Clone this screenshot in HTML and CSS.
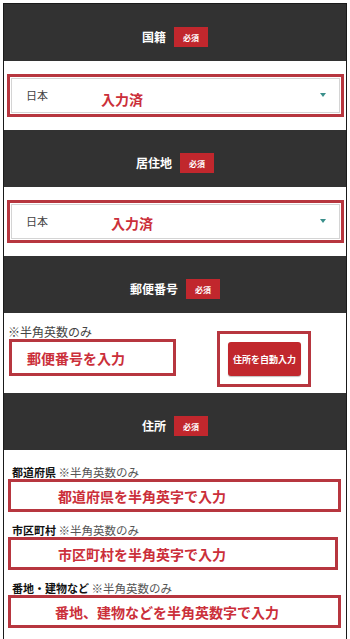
FILE: index.html
```html
<!DOCTYPE html>
<html lang="ja">
<head>
<meta charset="utf-8">
<title>フォーム</title>
<link rel="stylesheet" href="styles.css">
</head>
<body>
<div class="frame">
  <div class="sec-head"><span class="sec-title">国籍</span><span class="badge">必須</span></div>
  <div class="sec-body sel-body">
    <div class="mark sel-mark">
      <div class="select">
        <span class="sel-value">日本</span>
        <span class="ann ann-sel">入力済</span>
        <span class="arrow"></span>
      </div>
    </div>
  </div>

  <div class="sec-head"><span class="sec-title">居住地</span><span class="badge">必須</span></div>
  <div class="sec-body sel-body">
    <div class="mark sel-mark">
      <div class="select">
        <span class="sel-value">日本</span>
        <span class="ann ann-sel ann-sel-2">入力済</span>
        <span class="arrow"></span>
      </div>
    </div>
  </div>

  <div class="sec-head"><span class="sec-title">郵便番号</span><span class="badge">必須</span></div>
  <div class="sec-body postal">
    <div class="postal-left">
      <div class="note">※半角英数のみ</div>
      <div class="mark postal-box"><span class="ann">郵便番号を入力</span></div>
    </div>
    <div class="mark btn-mark">
      <div class="btn">住所を自動入力</div>
    </div>
  </div>

  <div class="sec-head"><span class="sec-title">住所</span><span class="badge">必須</span></div>
  <div class="sec-body addr">
    <div class="field">
      <div class="f-label"><b>都道府県</b> <span class="f-note">※半角英数のみ</span></div>
      <div class="mark addr-box"><span class="ann">都道府県を半角英字で入力</span></div>
    </div>
    <div class="field">
      <div class="f-label"><b>市区町村</b> <span class="f-note">※半角英数のみ</span></div>
      <div class="mark addr-box addr-box-narrow"><span class="ann">市区町村を半角英字で入力</span></div>
    </div>
    <div class="field">
      <div class="f-label"><b>番地・建物など</b> <span class="f-note">※半角英数のみ</span></div>
      <div class="mark addr-box"><span class="ann ann-3">番地、建物などを半角英数字で入力</span></div>
    </div>
  </div>
</div>
</body>
</html>
```

FILE: styles.css
```css
html, body {
  margin: 0;
  padding: 0;
  height: 639px;
  overflow: hidden;
  background: #fff;
}
body {
  font-family: "Noto Sans CJK JP", "Noto Sans", "Liberation Sans", sans-serif;
  color: #333;
  padding: 3px 0 0 3px;
  box-sizing: border-box;
}
.frame {
  width: 344px;
  min-height: 660px;
  border: 1px solid #1a1a1a;
  box-sizing: border-box;
  background: #fff;
}
.sec-head {
  height: 57px;
  background: #323232;
  display: flex;
  justify-content: center;
  align-items: center;
  gap: 8px;
  padding-top: 9px;
  box-sizing: border-box;
}
.sec-title {
  color: #fff;
  font-size: 12px;
  font-weight: 700;
  line-height: 14px;
}
.badge {
  background: #c1272d;
  color: #fff;
  font-size: 8px;
  font-weight: 700;
  width: 34px;
  height: 20px;
  display: flex;
  align-items: center;
  justify-content: center;
}
.mark {
  border: 3px solid #b7363f;
  box-sizing: border-box;
}
.ann {
  color: #cb2f3a;
  font-size: 14px;
  font-weight: 700;
  line-height: 16px;
  white-space: nowrap;
}
/* select sections */
.sel-body {
  padding: 13px 2px 13px 3px;
}
.sel-mark {
  height: 43px;
  padding: 1px;
}
.select {
  height: 100%;
  border: 1px solid #d4d4d4;
  box-sizing: border-box;
  display: flex;
  align-items: center;
  padding: 0 13px 0 14px;
}
.sel-value {
  width: 75px;
  flex: none;
  font-size: 11px;
  color: #444;
  line-height: 14px;
  margin-top: -2px;
}
.ann-sel {
  margin-top: 7px;
}
.ann-sel-2 {
  margin-left: 10px;
  margin-top: 2px;
}
.arrow {
  margin-left: auto;
  width: 0;
  height: 0;
  border-left: 3.5px solid transparent;
  border-right: 3.5px solid transparent;
  border-top: 4px solid #3a8f8b;
  margin-top: -1px;
}
/* postal */
.postal {
  display: flex;
  align-items: flex-start;
  padding: 0 0 6px 4px;
}
.postal-left {
  margin-top: 12px;
  width: 172px;
}
.note {
  font-size: 12px;
  line-height: 14px;
  color: #444;
}
.postal-box {
  margin-left: 1px;
  width: 167px;
  height: 37px;
  display: flex;
  align-items: center;
  padding-left: 15px;
}
.btn-mark {
  margin-top: 18px;
  margin-left: 37px;
  width: 94px;
  height: 56px;
  padding: 8px 7px 8px 8px;
}
.btn {
  height: 100%;
  background: #c1272d;
  border-radius: 3px;
  color: #fff;
  font-size: 9px;
  font-weight: 700;
  display: flex;
  align-items: center;
  justify-content: center;
  box-shadow: 0 1px 1px rgba(0,0,0,0.25);
}
/* address */
.addr {
  padding: 4px 5px 0 4px;
}
.field {
  margin-top: 11px;
}
.f-label {
  font-size: 11px;
  line-height: 14px;
  color: #111;
  padding-left: 4px;
}
.f-label b {
  font-weight: 700;
}
.f-note {
  color: #555;
  font-size: 11.5px;
}
.addr-box {
  height: 33px;
  display: flex;
  align-items: center;
  padding-left: 47px;
}
.addr-box-narrow {
  margin-right: 3px;
}
.ann-3 {
  margin-left: -3px;
}
```
